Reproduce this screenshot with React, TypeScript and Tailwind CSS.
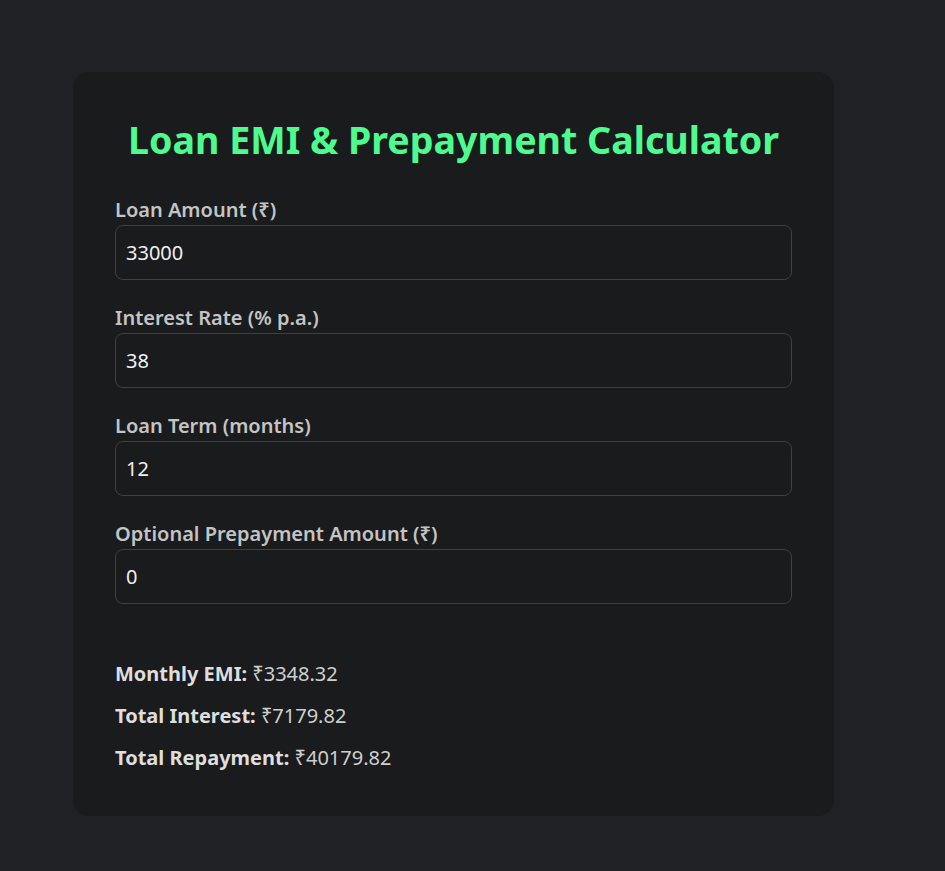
import { useState } from 'react'

//-------------------------------helpers---------------------------------

const calcEmi = (principal: number, rate: number, months: number) => {
  const r = rate / 12 / 100
  if (!months) return 0
  if (!r) return principal / months
  return (principal * r * Math.pow(1 + r, months)) / (Math.pow(1 + r, months) - 1)
}

type FieldProps = {
  label: string
  value: string
  onChange: (v: string) => void
}

const Field = ({ label, value, onChange }: FieldProps) => {
  return (
    <div className="mb-[26px] flex flex-col">
      <label className="mb-[3px] text-[20px] leading-[24px] font-semibold text-[#c4c4c4]">
        {label}
      </label>
      <input
        type="number"
        value={value}
        onChange={(e) => onChange(e.target.value)}
        className="h-[55px] w-full rounded-[8px] border border-[#3f4044] bg-[#1a1b1d] px-[10px] text-[20px] text-[#f0f0f0] outline-none"
      />
    </div>
  )
}

//------------------------------RENDER--------------------------------

export default function App() {
  const [amount, setAmount] = useState('33000')
  const [rate, setRate] = useState('38')
  const [term, setTerm] = useState('12')
  const [prepay, setPrepay] = useState('0')

  const principal = (Number(amount) || 0) - (Number(prepay) || 0)
  const months = Number(term) || 0
  const emi = calcEmi(principal, Number(rate) || 0, months)
  const total = emi * months
  const interest = total - principal

  return (
    <div
      className="min-h-[871px] w-full bg-[#202124] pt-[72px] pl-[73px] pb-[56px]"
      style={{ fontFamily: '"Noto Sans", "Open Sans", sans-serif' }}
    >
      <div className="w-[761px] rounded-[16px] bg-[#1a1b1d] px-[42px] pt-[43px] pb-[46px]">
        <h1 className="mb-[33px] text-center text-[37.6px] leading-[50px] font-bold text-[#4dfc8f]">
          Loan EMI &amp; Prepayment Calculator
        </h1>

        <Field label="Loan Amount (₹)" value={amount} onChange={setAmount} />
        <Field label="Interest Rate (% p.a.)" value={rate} onChange={setRate} />
        <Field label="Loan Term (months)" value={term} onChange={setTerm} />
        <Field
          label="Optional Prepayment Amount (₹)"
          value={prepay}
          onChange={setPrepay}
        />

        <div className="pt-[32px] text-[20px] leading-[24px] text-[#cfcfcf]">
          <p className="mb-[18px]">
            <strong className="font-bold text-[#dedede]">Monthly EMI:</strong> ₹
            {emi.toFixed(2)}
          </p>
          <p className="mb-[18px]">
            <strong className="font-bold text-[#dedede]">Total Interest:</strong> ₹
            {interest.toFixed(2)}
          </p>
          <p>
            <strong className="font-bold text-[#dedede]">Total Repayment:</strong> ₹
            {total.toFixed(2)}
          </p>
        </div>
      </div>
    </div>
  )
}
